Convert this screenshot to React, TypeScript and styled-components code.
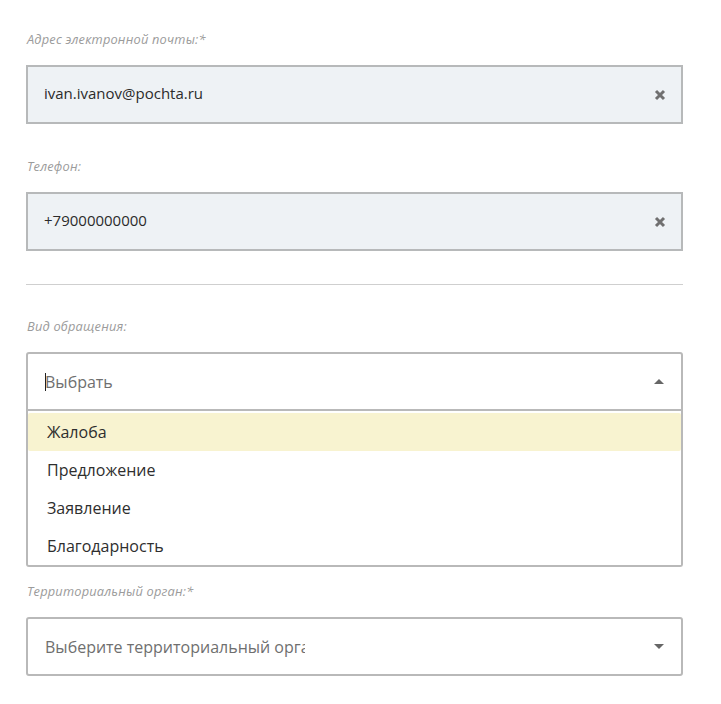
import React from "react";
import styled, { createGlobalStyle } from "styled-components";

const GlobalStyle = createGlobalStyle`
  body {
    margin: 0;
    background: #ffffff;
    font-family: "Open Sans", "Noto Sans", sans-serif;
    color: #333333;
  }
`;

const Form = styled.div`
  width: 657px;
  padding: 30px 0 0 26px;
`;

const Group = styled.div<{ $top?: number }>`
  margin-top: ${p => (p.$top === undefined ? 33 : p.$top)}px;
  &:first-child {
    margin-top: 0;
  }
`;

const Label = styled.div`
  font-size: 12.8px;
  font-style: italic;
  line-height: 18px;
  height: 18px;
  color: #9b9b9b;
  padding-left: 1px;
  margin-bottom: 17px;
  letter-spacing: 0.2px;
`;

const TextBox = styled.div`
  box-sizing: border-box;
  height: 59px;
  display: flex;
  align-items: center;
  justify-content: space-between;
  padding: 0 14px 4px 16px;
  background: #eef2f5;
  border: 2px solid #b7b9ba;
  font-size: 15px;
  color: #2b2b2b;
`;

const ClearButton = styled.span`
  display: flex;
  align-items: center;
  justify-content: center;
  width: 14px;
  height: 14px;
  margin-top: 5px;
`;

const Divider = styled.hr`
  margin: 33px 0 0;
  border: 0;
  border-top: 1px solid #cfcfcf;
  height: 0;
`;

const SelectWrap = styled.div`
  position: relative;
`;

const SelectBox = styled.div<{ $open?: boolean }>`
  box-sizing: border-box;
  height: 59px;
  display: flex;
  align-items: center;
  justify-content: space-between;
  padding: 0 17px 0 17px;
  background: #ffffff;
  border: 2px solid #b9b9b9;
  border-radius: ${p => (p.$open ? "3px 3px 0 0" : "3px")};
  font-size: 16px;
`;

const Placeholder = styled.span<{ $width?: number }>`
  display: flex;
  align-items: center;
  color: #6f6f6f;
  white-space: nowrap;
  overflow: hidden;
  width: ${p => (p.$width ? `${p.$width}px` : "auto")};
`;

const TextCursor = styled.span`
  display: inline-block;
  width: 1px;
  height: 18px;
  background: #222;
  margin-right: -1px;
`;

const Caret = styled.span<{ $up?: boolean }>`
  width: 0;
  height: 0;
  border-left: 5px solid transparent;
  border-right: 5px solid transparent;
  ${p =>
    p.$up ? "border-bottom: 5px solid #666;" : "border-top: 5px solid #666;"}
`;

const Menu = styled.ul`
  position: absolute;
  left: 0;
  right: 0;
  top: 59px;
  margin: 0;
  padding: 0 0 2px;
  list-style: none;
  box-sizing: border-box;
  height: 156px;
  background: #ffffff;
  border: 2px solid #b9b9b9;
  border-top: 0;
  border-radius: 0 0 3px 3px;
  z-index: 2;
`;

const Option = styled.li<{ $active?: boolean }>`
  height: 38px;
  display: flex;
  align-items: center;
  padding-left: 19px;
  font-size: 16px;
  color: #2e2e2e;
  background: ${p => (p.$active ? "#f8f3d0" : "transparent")};
  border-radius: 2px;
  &:first-child {
    margin-top: 2px;
  }
`;

const CloseIcon = () => (
  <svg width="12" height="12" viewBox="0 0 12 12">
    <path d="M2 2 L10 10 M10 2 L2 10" stroke="#707070" strokeWidth="3" strokeLinecap="butt" />
  </svg>
);

const options = ["Жалоба", "Предложение", "Заявление", "Благодарность"];

export default function App() {
  return (
    <>
      <GlobalStyle />
      <Form>
        <Group>
          <Label>Адрес электронной почты:*</Label>
          <TextBox>
            <span>ivan.ivanov@pochta.ru</span>
            <ClearButton>
              <CloseIcon />
            </ClearButton>
          </TextBox>
        </Group>
        <Group>
          <Label>Телефон:</Label>
          <TextBox>
            <span>+79000000000</span>
            <ClearButton>
              <CloseIcon />
            </ClearButton>
          </TextBox>
        </Group>
        <Divider />
        <Group $top={32}>
          <Label>Вид обращения:</Label>
          <SelectWrap>
            <SelectBox $open>
              <Placeholder>
                <TextCursor />
                Выбрать
              </Placeholder>
              <Caret $up />
            </SelectBox>
            <Menu>
              {options.map((o, i) => (
                <Option key={o} $active={i === 0}>
                  {o}
                </Option>
              ))}
            </Menu>
          </SelectWrap>
        </Group>
        <Group $top={171}>
          <Label>Территориальный орган:*</Label>
          <SelectBox>
            <Placeholder $width={260}>Выберите территориальный орган</Placeholder>
            <Caret />
          </SelectBox>
        </Group>
      </Form>
    </>
  );
}
